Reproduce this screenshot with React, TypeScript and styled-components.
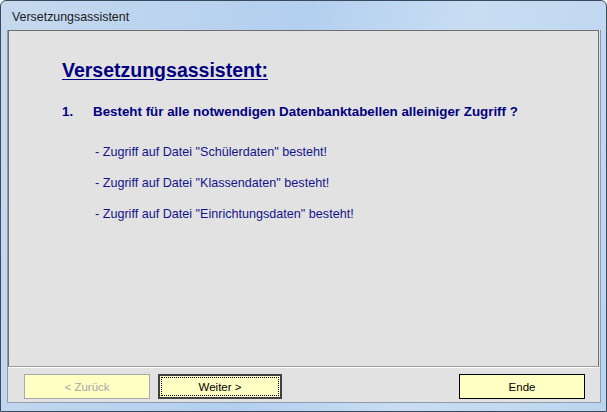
import React from 'react'
import styled, { createGlobalStyle } from 'styled-components'

const GlobalStyle = createGlobalStyle`
  html, body {
    margin: 0;
    padding: 0;
    background: #ffffff;
  }
  * {
    box-sizing: border-box;
  }
`

const Window = styled.div`
  width: 607px;
  height: 412px;
  display: flex;
  flex-direction: column;
  padding: 0 5px 8px 6px;
  border: 1px solid #3a4a5c;
  border-radius: 6px 6px 0 0;
  background: linear-gradient(100deg, #c6d9ee 0%, #b3cff0 45%, #c8ddf2 70%, #bcd5ef 100%);
  overflow: hidden;
`

const TitleBar = styled.div`
  height: 29px;
  display: flex;
  align-items: center;
  padding-left: 5px;
  padding-top: 3px;
  font-family: 'Liberation Sans', Arial, sans-serif;
  font-size: 12.4px;
  color: #1b1b1b;
`

const Client = styled.div`
  flex: 1;
  display: flex;
  flex-direction: column;
  background: #e2e2e2;
  border: 1px solid #8c9bae;
  border-top: none;
`

const Panel = styled.div`
  height: 337px;
  margin: 0 1px 0 0;
  border: 1px solid #6e6e6e;
  border-bottom-color: #9a9a9a;
  box-shadow: 0 1px 0 #ffffff;
  padding: 27px 0 0 53px;
  font-family: 'Liberation Sans', Arial, sans-serif;
  color: #000080;
`

const Heading = styled.h1`
  margin: 0;
  font-size: 19.5px;
  font-weight: bold;
  text-decoration: underline;
  text-underline-offset: 2px;
  line-height: 24px;
`

const Question = styled.div`
  display: flex;
  margin-top: 22px;
  font-size: 13.35px;
  font-weight: bold;
  line-height: 15px;
`

const Number = styled.span`
  width: 31px;
`

const Items = styled.ul`
  list-style: none;
  margin: 26px 0 0 33px;
  padding: 0;
  display: flex;
  flex-direction: column;
  gap: 16px;
  font-size: 12.6px;
  line-height: 15px;
  color: #14148a;
`

const ButtonBar = styled.div`
  flex: 1;
  display: flex;
  align-items: center;
  padding: 4px 15px 0 16px;
  gap: 8px;
`

const Button = styled.button<{ $variant?: 'disabled' | 'default' | 'normal' }>`
  width: ${(p) => (p.$variant === 'default' ? '124px' : '126px')};
  height: 25px;
  padding: 0;
  background: #ffffc4;
  font-family: 'Liberation Sans', Arial, sans-serif;
  font-size: 11.5px;
  color: ${(p) => (p.$variant === 'disabled' ? '#a6a6a6' : '#000000')};
  border: ${(p) =>
    p.$variant === 'disabled'
      ? '1px solid #a8a8a8'
      : p.$variant === 'default'
        ? '2px solid #404040'
        : '1px solid #000000'};
  outline: ${(p) => (p.$variant === 'default' ? '1px dotted #000000' : 'none')};
  outline-offset: -4px;
  cursor: default;
`

const Spacer = styled.div`
  flex: 1;
`

const items = ['Schülerdaten', 'Klassendaten', 'Einrichtungsdaten']

export default function App() {
  return (
    <>
      <GlobalStyle />
      <Window>
        <TitleBar>Versetzungsassistent</TitleBar>
        <Client>
          <Panel>
            <Heading>Versetzungsassistent:</Heading>
            <Question>
              <Number>1.</Number>
              <span>Besteht für alle notwendigen Datenbanktabellen alleiniger Zugriff ?</span>
            </Question>
            <Items>
              {items.map((name) => (
                <li key={name}>- Zugriff auf Datei "{name}" besteht!</li>
              ))}
            </Items>
          </Panel>
          <ButtonBar>
            <Button $variant="disabled">&lt; Zurück</Button>
            <Button $variant="default">Weiter &gt;</Button>
            <Spacer />
            <Button $variant="normal">Ende</Button>
          </ButtonBar>
        </Client>
      </Window>
    </>
  )
}
